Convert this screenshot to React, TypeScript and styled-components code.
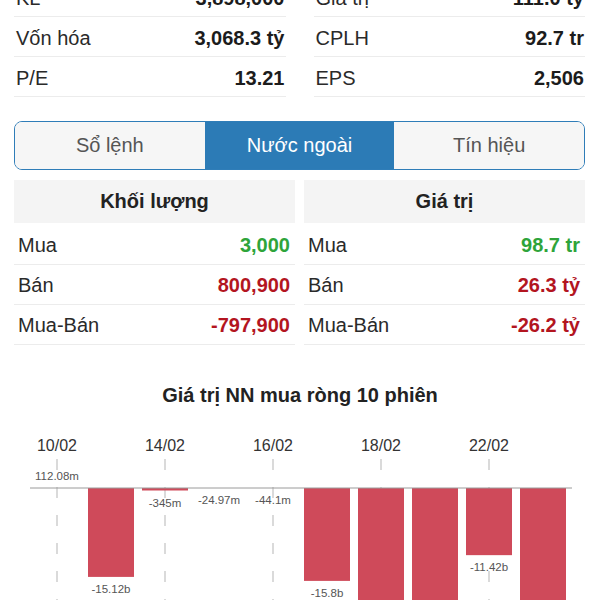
import React from "react";
import styled, { createGlobalStyle } from "styled-components";

const GlobalStyle = createGlobalStyle`
  html, body { margin: 0; padding: 0; background: #ffffff; overflow: hidden; }
  body { font-family: "Liberation Sans", Arial, sans-serif; color: #222; }
`;

const Page = styled.div`
  width: 600px;
  margin-top: -23px;
  display: flex;
  flex-direction: column;
`;

const Section = styled.div<{ $top?: number }>`
  padding: 0 15px 0 14px;
  margin-top: ${(p) => p.$top ?? 0}px;
`;

const InfoGrid = styled.div`
  display: grid;
  grid-template-columns: 1fr 1fr;
  column-gap: 28px;
`;

const InfoRow = styled.div`
  height: 40px;
  box-sizing: border-box;
  border-bottom: 1px solid #ececec;
  display: flex;
  align-items: center;
  justify-content: space-between;
  padding: 4px 1px 0 2px;
  font-size: 20px;
`;

const Label = styled.span`
  color: #2a2a2a;
`;

const Value = styled.span<{ $color?: string }>`
  font-weight: 700;
  color: ${(p) => p.$color ?? "#1c1c1c"};
`;

const Tabs = styled.div`
  display: grid;
  grid-template-columns: repeat(3, 1fr);
  height: 49px;
  border: 1.5px solid #2f7db8;
  border-radius: 8px;
  overflow: hidden;
  box-sizing: border-box;
`;

const Tab = styled.div<{ $active?: boolean }>`
  display: flex;
  align-items: center;
  justify-content: center;
  font-size: 20px;
  background: ${(p) => (p.$active ? "#2c7bb6" : "#f6f6f6")};
  color: ${(p) => (p.$active ? "#ffffff" : "#555555")};
`;

const TableGrid = styled.div`
  display: grid;
  grid-template-columns: 1fr 1fr;
  column-gap: 9px;
`;

const Column = styled.div`
  display: flex;
  flex-direction: column;
`;

const Header = styled.div`
  height: 43px;
  background: #f4f4f4;
  display: flex;
  align-items: center;
  justify-content: center;
  font-size: 20px;
  font-weight: 700;
  color: #222;
  margin-bottom: 2px;
`;

const DataRow = styled.div`
  height: 40px;
  box-sizing: border-box;
  border-bottom: 1px solid #ececec;
  display: flex;
  align-items: center;
  justify-content: space-between;
  padding: 1px 5px 0 4px;
  font-size: 20px;
`;

const Title = styled.div`
  margin-top: 38px;
  text-align: center;
  font-size: 20px;
  line-height: 24px;
  font-weight: 700;
  color: #222;
`;

const ChartSvg = styled.svg`
  display: block;
  width: 600px;
  height: 193px;
  overflow: visible;
  font-family: "Liberation Sans", Arial, sans-serif;
`;

const GREEN = "#2ea43a";
const RED = "#b3151f";

const info = [
  ["KL", "3,898,000", "Giá trị", "111.0 tỷ"],
  ["Vốn hóa", "3,068.3 tỷ", "CPLH", "92.7 tr"],
  ["P/E", "13.21", "EPS", "2,506"],
];

type Cell = { label: string; value: string; color: string };

const volume: Cell[] = [
  { label: "Mua", value: "3,000", color: GREEN },
  { label: "Bán", value: "800,900", color: RED },
  { label: "Mua-Bán", value: "-797,900", color: RED },
];
const valueRows: Cell[] = [
  { label: "Mua", value: "98.7 tr", color: GREEN },
  { label: "Bán", value: "26.3 tỷ", color: RED },
  { label: "Mua-Bán", value: "-26.2 tỷ", color: RED },
];

const bars = [
  { v: 0.11208, label: "112.08m" },
  { v: -15.12, label: "-15.12b" },
  { v: -0.345, label: "-345m" },
  { v: -0.02497, label: "-24.97m" },
  { v: -0.0441, label: "-44.1m" },
  { v: -15.8, label: "-15.8b" },
  { v: -21.5, label: "" },
  { v: -22.5, label: "" },
  { v: -11.42, label: "-11.42b" },
  { v: -21.8, label: "" },
];

const dates = ["10/02", "14/02", "16/02", "18/02", "22/02"];

const Chart: React.FC = () => {
  const zero = 81;
  const scale = 5.88;
  const x0 = 57;
  const step = 54;
  const bw = 46;
  return (
    <ChartSvg viewBox="0 0 600 193">
      {dates.map((d, i) => {
        const x = x0 + i * 2 * step;
        return (
          <g key={d}>
            <text x={x} y={44} fontSize={16} fill="#333" textAnchor="middle">
              {d}
            </text>
            <line
              x1={x}
              y1={52}
              x2={x}
              y2={193}
              stroke="#b5b5b5"
              strokeWidth={1}
              strokeDasharray="11 17"
            />
          </g>
        );
      })}
      {bars.map((b, i) => {
        const cx = x0 + i * step;
        const raw = Math.abs(b.v) * scale;
        const h = b.v < -0.2 ? Math.max(raw, 2.5) : raw;
        const y = b.v >= 0 ? zero - h : zero;
        const labelY = b.v >= 0 ? zero - 8 : zero + h + 16;
        return (
          <g key={i}>
            {h >= 1 && <rect x={cx - bw / 2} y={y} width={bw} height={h} fill="#cf4a5a" />}
            {b.label && (
              <text x={cx} y={labelY} fontSize={11.5} fill="#555" textAnchor="middle">
                {b.label}
              </text>
            )}
          </g>
        );
      })}
      <line x1={30} y1={zero} x2={572} y2={zero} stroke="#9a9a9a" strokeWidth={1} />
    </ChartSvg>
  );
};

const App: React.FC = () => (
  <>
    <GlobalStyle />
    <Page>
      <Section>
        <InfoGrid>
          {info.map(([l1, v1, l2, v2]) => (
            <React.Fragment key={l1}>
              <InfoRow>
                <Label>{l1}</Label>
                <Value>{v1}</Value>
              </InfoRow>
              <InfoRow>
                <Label>{l2}</Label>
                <Value>{v2}</Value>
              </InfoRow>
            </React.Fragment>
          ))}
        </InfoGrid>
      </Section>
      <Section $top={24}>
        <Tabs>
          <Tab>Sổ lệnh</Tab>
          <Tab $active>Nước ngoài</Tab>
          <Tab>Tín hiệu</Tab>
        </Tabs>
      </Section>
      <Section $top={10}>
        <TableGrid>
          <Column>
            <Header>Khối lượng</Header>
            {volume.map((r) => (
              <DataRow key={r.label}>
                <Label>{r.label}</Label>
                <Value $color={r.color}>{r.value}</Value>
              </DataRow>
            ))}
          </Column>
          <Column>
            <Header>Giá trị</Header>
            {valueRows.map((r) => (
              <DataRow key={r.label}>
                <Label>{r.label}</Label>
                <Value $color={r.color}>{r.value}</Value>
              </DataRow>
            ))}
          </Column>
        </TableGrid>
      </Section>
      <Title>Giá trị NN mua ròng 10 phiên</Title>
      <Chart />
    </Page>
  </>
);

export default App;
